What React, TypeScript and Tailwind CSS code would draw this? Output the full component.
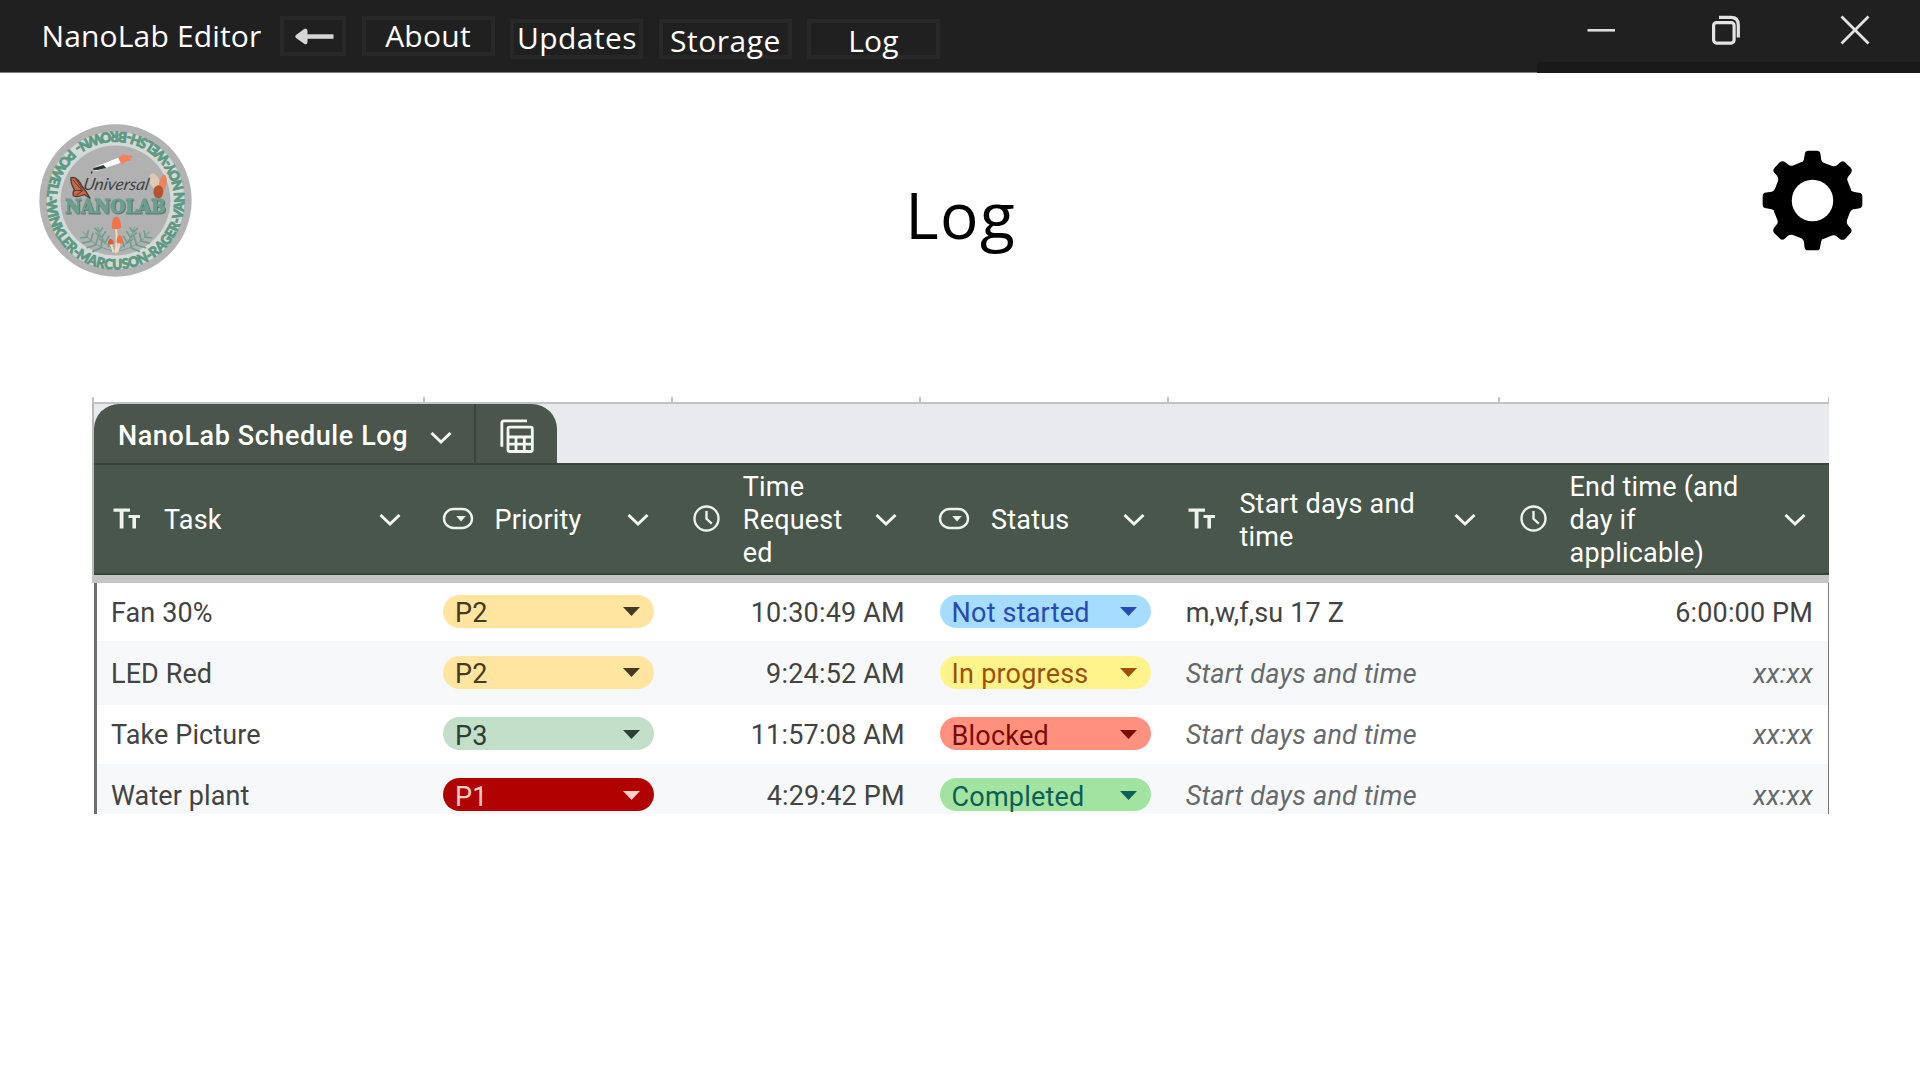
import React from "react";

type Kind = "text" | "chip" | "time";

const columns: { kind: Kind; lines: string[]; width: string }[] = [
  { kind: "text", lines: ["Task"], width: "w-[330.5px]" },
  { kind: "chip", lines: ["Priority"], width: "w-[248.3px]" },
  { kind: "time", lines: ["Time", "Request", "ed"], width: "w-[248.3px]" },
  { kind: "chip", lines: ["Status"], width: "w-[248.3px]" },
  { kind: "text", lines: ["Start days and", "time"], width: "w-[330.2px]" },
  { kind: "time", lines: ["End time (and", "day if", "applicable)"], width: "w-[330px]" },
];

const rows = [
  {
    task: "Fan 30%", priority: "P2", pChip: "bg-[#ffe5a0] text-[#473821]", time: "10:30:49 AM",
    status: "Not started", sChip: "bg-[#a5dcff] text-[#2a4bae]", start: "m,w,f,su 17 Z", end: "6:00:00 PM",
    filled: true, row: "h-[58px] bg-white",
  },
  {
    task: "LED Red", priority: "P2", pChip: "bg-[#ffe5a0] text-[#473821]", time: "9:24:52 AM",
    status: "In progress", sChip: "bg-[#fff38c] text-[#9c5208]", start: "Start days and time", end: "xx:xx",
    filled: false, row: "h-[64px] bg-[#f6f8f9]",
  },
  {
    task: "Take Picture", priority: "P3", pChip: "bg-[#c3dfc9] text-[#2c3f33]", time: "11:57:08 AM",
    status: "Blocked", sChip: "bg-[#ff917e] text-[#7a0c08]", start: "Start days and time", end: "xx:xx",
    filled: false, row: "h-[59px] bg-white",
  },
  {
    task: "Water plant", priority: "P1", pChip: "bg-[#b10202] text-[#ffcfc9]", time: "4:29:42 PM",
    status: "Completed", sChip: "bg-[#a2e3a1] text-[#0d5f55]", start: "Start days and time", end: "xx:xx",
    filled: false, row: "h-[63px] bg-[#f6f8f9]",
  },
];

function Chevron() {
  return (
    <svg className="h-[12px] w-[22px] shrink-0" viewBox="0 0 22 12" fill="none" stroke="#f4f6f4" strokeWidth="2.9">
      <path d="M1.5 1 L11 10 L20.5 1" />
    </svg>
  );
}

function KindIcon({ kind }: { kind: Kind }) {
  return (
    <svg className="h-8 w-8 shrink-0" viewBox="0 0 32 32" fill="none" stroke="#eef1ee" strokeWidth="2.4">
      {kind === "text" && (
        <g fill="#eef1ee" stroke="none">
          <path d="M2.5 5.5 H19 V8.700 H12.5 V25.500 H8.700 V8.700 H2.5 Z" />
          <path d="M17.5 12 H29 V15 H25 V25.500 H21.4 V15 H17.5 Z" />
        </g>
      )}
      {kind === "chip" && (
        <>
          <rect x="2" y="6" width="28" height="19" rx="9.500" />
          <path d="M14.2 13 H23.8 L19 18.500 Z" fill="#eef1ee" stroke="none" />
        </>
      )}
      {kind === "time" && (
        <>
          <circle cx="16.500" cy="15.500" r="12" />
          <path d="M16.500 8 V15.800 L21.800 20.700" />
        </>
      )}
    </svg>
  );
}

function TableIcon() {
  return (
    <svg className="h-9 w-9" viewBox="1257 98 108 108" fill="none" stroke="#f4f6f4" strokeWidth="8.500">
      <path d="M1265.5 184 V113 Q1265.5 106.500 1272 106.500 H1341" />
      <rect x="1284" y="125.500" width="73" height="73" rx="5" />
      <path d="M1284 155 H1357 M1284 176.500 H1357" />
      <path d="M1308 155 V198 M1333 155 V198" />
    </svg>
  );
}

function Chip({ label, tone }: { label: string; tone: string }) {
  return (
    <div className={`mb-[2px] flex h-[33px] w-[211px] items-center justify-between rounded-full pt-[2px] pr-[14px] pl-[12px] ${tone}`}>
      <span className="pt-[2px] leading-[30px] tracking-[0.2px]">{label}</span>
      <svg className="mb-[1px] h-[9px] w-[17px]" viewBox="0 0 17 9" fill="currentColor">
        <path d="M0 0 H17 L8.500 9 Z" />
      </svg>
    </div>
  );
}

function Gear() {
  const quarter =
    "M216 212 L181 100 Q188 97 190 90 L193 74 Q193 63 204 63 H229 Q239 63 240 74 L242 90 Q244 97 251 100 L275 109 Q283 111 290 106 L299 98 Q306 92 313 98 L330 114 Q337 122 330 131 L323 140 Q318 146 321 154 L332 181 Z";
  return (
    <svg className="h-[101px] w-[101px]" viewBox="65 61 302 302">
      {[0, 90, 180, 270].map((a) => (
        <path key={a} d={quarter} transform={`rotate(${a} 216 212)`} />
      ))}
      <circle cx="216" cy="212" r="100" />
      <circle cx="216" cy="212" r="62" fill="#fff" />
    </svg>
  );
}

function Fern({ flip }: { flip?: boolean }) {
  return (
    <g transform={flip ? "translate(520 0) scale(-1 1)" : undefined} stroke="#6f9f90" strokeLinecap="round" fill="none">
      <path d="M160 350 Q190 395 250 408" strokeWidth="3" />
      <path d="M205 336 Q215 380 250 402" strokeWidth="3" />
      <path
        d="M172 366 L153 368 M172 366 L176 347 M184 378 L160 384 M184 378 L190 354 M198 390 L172 398 M198 390 L206 364 M214 399 L190 409 M214 399 L218 374 M209 352 L196 340 M209 352 L219 338 M214 366 L200 354 M216 368 L228 350 M224 382 L210 372 M226 384 L238 364 M236 394 L242 376"
        strokeWidth="5"
      />
    </g>
  );
}

function Logo() {
  return (
    <svg className="h-[153px] w-[153px]" viewBox="28 26 460 460">
      <defs>
        <path id="ring" d="M121 101 A206 206 0 0 0 395 411 A206 206 0 0 0 121 101" />
      </defs>
      <circle cx="258" cy="256" r="229" fill="#b3b3b3" />
      <circle cx="258" cy="256" r="207" fill="#d3dad7" />
      <circle cx="258" cy="256" r="165" fill="#b1b1b1" />
      <text className="font-['Lato'] text-[42px] font-black" fill="#5f9883" stroke="#5f9883" strokeWidth="2.5">
        <textPath href="#ring" textLength="1285" lengthAdjust="spacingAndGlyphs">
          POWELL-WINKLER-MARCUSON-RAGER-VAN NOY-WELSH-BROWN-
        </textPath>
      </text>
      <path d="M196 155 L268 127 L276 142 L206 166 Q194 168 192 163 Z" fill="#fff" />
      <path d="M192 158 L222 149 L230 158 L204 164 Q196 166 190 162 Z" fill="#2f3537" />
      <path d="M186 166 q5 5 1 11 q-5 -4 -1 -11Z" fill="#333" />
      <path d="M266 128 L280 118 L304 121 L311 126 L300 130 L307 135 L292 138 L276 148 Z" fill="#f08260" />
      <path d="M124 187 Q144 184 158 214 Q172 232 182 250 L164 238 Q146 248 132 242 Q128 234 134 222 Q122 204 124 187 Z" fill="#c9694a" stroke="#513c38" strokeWidth="4" />
      <path d="M130 194 L156 224 M134 226 L160 226 M140 240 L160 226 M140 192 L158 222" stroke="#513c38" strokeWidth="3" />
      <ellipse cx="375" cy="198" rx="15" ry="24" fill="#dfc8b4" transform="rotate(-22 375 198)" />
      <ellipse cx="400" cy="205" rx="11" ry="27" fill="#e98563" transform="rotate(12 400 205)" />
      <ellipse cx="387" cy="230" rx="15" ry="20" fill="#b4552f" />
      <text x="160" y="223" textLength="197" lengthAdjust="spacingAndGlyphs" transform="translate(42 0) skewX(-11)" className="font-['Lato'] text-[50px] italic" fill="#3f4344">
        Universal
      </text>
      <text
        x="107"
        y="295"
        textLength="302"
        lengthAdjust="spacingAndGlyphs"
        className="font-['DejaVu_Serif'] text-[58px] font-bold drop-shadow-[2px_2px_0_#3f5f56]"
        fill="#6c9f8f"
        stroke="#6c9f8f"
        strokeWidth="3"
      >
        NANOLAB
      </text>
      <Fern />
      <Fern flip />
      <path d="M259 336 Q265 374 258 414 M244 384 Q248 400 252 412 M270 380 Q268 398 263 412" stroke="#f3d9bd" strokeWidth="6" fill="none" />
      <path d="M247 340 Q246 306 260 305 Q274 306 275 338 Q262 346 247 340 Z" fill="#ef7449" />
      <path d="M235 386 Q236 372 244 372 Q252 374 253 386 Q244 391 235 386 Z" fill="#dd5d35" />
      <path d="M261 382 Q262 360 271 360 Q279 362 281 382 Q271 388 261 382 Z" fill="#ef7449" />
    </svg>
  );
}

function NavBox({ label, box, text }: { label: string; box: string; text: string }) {
  return (
    <div className={`flex h-[40px] w-[133px] justify-center border-4 border-[#282828] ${box}`}>
      <span className={`leading-[40px] whitespace-nowrap ${text}`}>{label}</span>
    </div>
  );
}

function TitleBar() {
  return (
    <header className="flex h-[73px] items-start justify-between bg-[#202020] text-[30px] text-white">
      <div className="flex h-[73px] flex-1 items-start border-b border-[#7d7d7d] pl-[41.5px]">
        <span className="mt-[15.5px] w-[238.5px] leading-[40px] tracking-[0.15px]">NanoLab Editor</span>
        <div className="mt-4 mr-[15.500px] flex h-[40px] w-[66px] items-center justify-center border-4 border-[#282828] pl-[2px]">
          <svg className="h-[17px] w-[39px] shrink-0" viewBox="0 0 39 17" fill="#d6d6d6">
            <path d="M11 6.300 H38.500 V10.800 H11 Z" />
            <path d="M1 7 L9.500 0.800 Q12.500 0 12.500 3 V14 Q12.500 17 9.500 16 L1 10 Q-0.500 8.500 1 7 Z" />
          </svg>
        </div>
        <div className="flex gap-[15.5px]">
          <NavBox label="About" box="mt-4" text="-mt-[4.500px] tracking-[0.25px]" />
          <NavBox label="Updates" box="mt-[19px]" text="-mt-[5px] pl-px tracking-[0.4px]" />
          <NavBox label="Storage" box="mt-[19px]" text="-mt-[2px] pl-px tracking-[0.5px]" />
          <NavBox label="Log" box="mt-[19px]" text="-mt-[2px] tracking-[0.2px]" />
        </div>
      </div>
      <div className="h-[73px] w-[383px] border-b-[11px] border-[#191919]">
        <div className="flex items-center pt-[15px] pl-[49px]">
          <svg className="mr-[94.500px] h-[30px] w-[30px]" viewBox="0 0 30 30" stroke="#dcdcdc" strokeWidth="2.6">
            <path d="M1.500 15.300 H29" />
          </svg>
          <svg className="mr-[99.500px] h-[30px] w-[30px]" viewBox="0 0 30 30" fill="none" stroke="#e3e3e3" strokeWidth="3.200">
            <rect x="2.600" y="7.600" width="20.500" height="20.500" rx="3" />
            <path d="M8 2.400 H20 Q27.300 2.400 27.300 10 V22.500" />
          </svg>
          <svg className="h-[30px] w-[30px]" viewBox="0 0 30 30" stroke="#e3e3e3" strokeWidth="2.800">
            <path d="M1.500 1.500 L28.500 28.500 M28.500 1.500 L1.500 28.500" />
          </svg>
        </div>
      </div>
    </header>
  );
}

export default function App() {
  return (
    <div className="h-[1080px] w-[1920px] overflow-hidden bg-white font-['Open_Sans',sans-serif]">
      <TitleBar />
      <div className="flex h-[324px] items-start justify-between pr-[57.5px] pl-[39px]">
        <div className="mt-[51px] w-[160px]">
          <Logo />
        </div>
        <h1 className="mt-[101.500px] pl-[20px] text-[64px] leading-[80px] tracking-[1.5px] text-black">Log</h1>
        <div className="mt-[77px] flex w-[160px] justify-end">
          <Gear />
        </div>
      </div>

      <section className="ml-[92px] h-[417px] w-[1737px] overflow-hidden font-['Roboto',sans-serif] text-[27px] text-[#434343]">
        <div className="flex h-[5px] border-r border-[#c4c4c4]">
          {columns.map((c) => (
            <div key={c.lines.join()} className={`shrink-0 border-l-2 border-[#c4c4c4] ${c.width}`} />
          ))}
        </div>
        <div className="h-[2px] bg-[#c2c3c4]" />
        <div className="border-l-2 border-[#b9bab9]">
          <div className="h-[59px] bg-[#e8eaed]">
            <div className="flex h-[59px] w-[463px] rounded-t-[25px] bg-[#4b554b] text-white">
              <div className="flex w-[382px] items-center justify-between border-r-2 border-[#3a443c] pr-[22px] pl-[24px]">
                <span className="pt-[5px] leading-[32px] font-medium tracking-[0.58px]">NanoLab Schedule Log</span>
                <span className="pt-[8px]">
                  <Chevron />
                </span>
              </div>
              <div className="flex flex-1 items-center justify-center pt-[4px]">
                <TableIcon />
              </div>
            </div>
          </div>
          <div className="flex h-[112px] border-y-2 border-[#38453d] bg-[#49564b] text-white">
            {columns.map((c, i) => (
              <div key={i} className={`flex shrink-0 items-center pl-[17px] ${c.width}`}>
                <KindIcon kind={c.kind} />
                <div className="flex-1 pt-[3px] pl-[21px] leading-[32.7px] tracking-[0.2px] whitespace-nowrap">
                  {c.lines.map((l) => (
                    <div key={l}>{l}</div>
                  ))}
                </div>
                <div className="mr-[24px] pt-[2px]">
                  <Chevron />
                </div>
              </div>
            ))}
          </div>
        </div>
        <div className="h-[8px] bg-[#c5c5c5]" />
        <div className="ml-[2px] h-[231px] overflow-hidden border-r border-l-[3px] border-r-[#777] border-l-[#6d716f]">
          {rows.map((r) => (
            <div key={r.task} className={`flex items-center ${r.row}`}>
              <div className="w-[326.300px] shrink-0 pt-[2px] pl-[14px] tracking-[0.1px]">{r.task}</div>
              <div className="w-[248.300px] shrink-0 pl-[19.700px]">
                <Chip label={r.priority} tone={r.pChip} />
              </div>
              <div className="w-[248.300px] shrink-0 pt-[2px] pr-[15px] text-right tracking-[0.200px]">{r.time}</div>
              <div className="w-[248.300px] shrink-0 pl-[19.700px]">
                <Chip label={r.status} tone={r.sChip} />
              </div>
              <div className={`flex flex-1 justify-between pt-[2px] pr-[15px] pl-[17.500px] ${r.filled ? "tracking-[0.150px]" : "text-[#666a6d] tracking-[0.250px] italic"}`}>
                <span>{r.start}</span>
                <span>{r.end}</span>
              </div>
            </div>
          ))}
        </div>
      </section>
    </div>
  );
}
